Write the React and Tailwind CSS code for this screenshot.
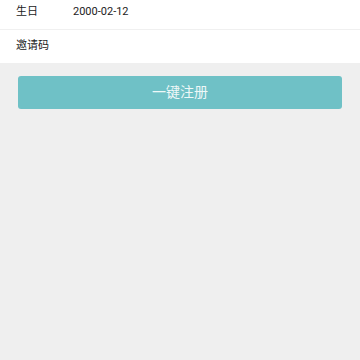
export default function App() {
  return (
    <div
      className="w-[360px] h-[360px] bg-[#efefef] overflow-hidden"
      style={{ fontFamily: 'Roboto, "Noto Sans CJK SC", sans-serif' }}
    >
      <div className="bg-white">
        <div className="flex items-center h-[30px] pb-[4px] px-[16px] border-b border-[#f0f0f0] text-[11px] text-[#222]">
          <span className="w-[57px]">生日</span>
          <span>2000-02-12</span>
        </div>
        <div className="flex items-center h-[33px] px-[16px] text-[11px] text-[#222]">
          <span>邀请码</span>
        </div>
      </div>
      <div className="px-[18px] pt-[13px]">
        <button className="w-full h-[33px] rounded-[3px] bg-[#6fc1c6] text-[#eef8f8] text-[14px] flex items-center justify-center">
          一键注册
        </button>
      </div>
    </div>
  );
}
